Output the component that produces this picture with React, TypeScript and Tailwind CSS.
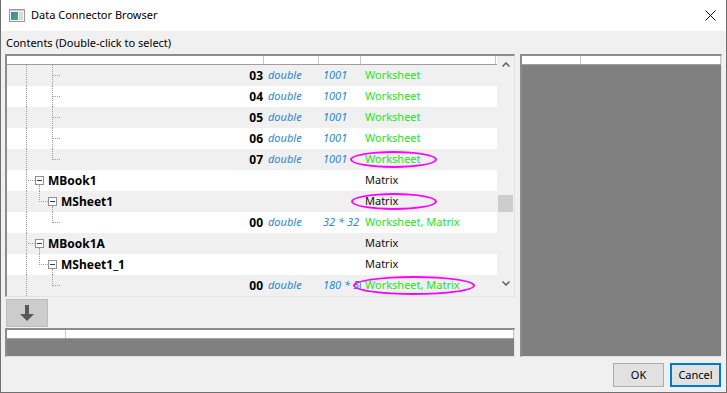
import React from 'react';

type RowKind = 'leaf' | 'lastLeaf' | 'book' | 'sheet';

type Row = {
  kind: RowKind;
  name?: string;
  idx?: string;
  dtype?: string;
  size?: string;
  usage?: string;
  green?: boolean;
  mark?: { left: number; width: number; top: number; height: number };
};

const rows: Row[] = [
  { kind: 'leaf', idx: '03', dtype: 'double', size: '1001', usage: 'Worksheet', green: true },
  { kind: 'leaf', idx: '04', dtype: 'double', size: '1001', usage: 'Worksheet', green: true },
  { kind: 'leaf', idx: '05', dtype: 'double', size: '1001', usage: 'Worksheet', green: true },
  { kind: 'leaf', idx: '06', dtype: 'double', size: '1001', usage: 'Worksheet', green: true },
  {
    kind: 'lastLeaf', idx: '07', dtype: 'double', size: '1001', usage: 'Worksheet', green: true,
    mark: { left: 343, width: 87, top: 2, height: 17 },
  },
  { kind: 'book', name: 'MBook1', usage: 'Matrix' },
  { kind: 'sheet', name: 'MSheet1', usage: 'Matrix', mark: { left: 344, width: 86, top: 2, height: 17 } },
  { kind: 'lastLeaf', idx: '00', dtype: 'double', size: '32 * 32', usage: 'Worksheet, Matrix', green: true },
  { kind: 'book', name: 'MBook1A', usage: 'Matrix' },
  { kind: 'sheet', name: 'MSheet1_1', usage: 'Matrix' },
  {
    kind: 'lastLeaf', idx: '00', dtype: 'double', size: '180 * 50', usage: 'Worksheet, Matrix', green: true,
    mark: { left: 346, width: 122, top: 1, height: 19 },
  },
];

// small "minus" expander box of the tree
const Expander = ({ left }: { left: number }) => (
  <span
    className="absolute top-[6px] w-[9px] h-[9px] border border-[#919191] bg-white flex items-center justify-center"
    style={{ left }}
  >
    <span className="block w-[5px] h-px bg-[#1f3f7a]" />
  </span>
);

const VLine = ({ left, top = 0, height = 21 }: { left: number; top?: number; height?: number }) => (
  <span className="absolute w-0 border-l border-dotted border-[#a0a0a0]" style={{ left, top, height }} />
);

const HLine = ({ left, width }: { left: number; width: number }) => (
  <span className="absolute top-[10px] h-0 border-t border-dotted border-[#a0a0a0]" style={{ left, width }} />
);

const TreeLines = ({ kind }: { kind: RowKind }) => {
  if (kind === 'leaf')
    return (
      <>
        <VLine left={19} />
        <VLine left={45} />
        <HLine left={45} width={8} />
      </>
    );
  if (kind === 'lastLeaf')
    return (
      <>
        <VLine left={19} />
        <VLine left={45} height={11} />
        <HLine left={45} width={8} />
      </>
    );
  if (kind === 'book')
    return (
      <>
        <VLine left={19} />
        <HLine left={19} width={9} />
        <Expander left={28} />
        <VLine left={32} top={15} height={6} />
      </>
    );
  return (
    <>
      <VLine left={19} />
      <VLine left={32} height={11} />
      <HLine left={32} width={9} />
      <Expander left={41} />
      <VLine left={45} top={15} height={6} />
    </>
  );
};

const Chevron = ({ up }: { up?: boolean }) => (
  <svg width="8" height="5" viewBox="0 0 8 5">
    <polyline
      points={up ? '0.5,4.5 4,1 7.5,4.5' : '0.5,0.5 4,4 7.5,0.5'}
      fill="none"
      stroke="#606060"
      strokeWidth="1.5"
    />
  </svg>
);

const frame =
  'border-t-2 border-l-2 border-r border-b border-t-[#8c8c8c] border-l-[#8c8c8c] border-r-[#e3e3e3] border-b-[#e3e3e3]';

const GrayPanel = ({ className }: { className: string }) => (
  <div className={`${frame} ${className} flex flex-col bg-[#808080]`}>
    <div className="h-[9px] shrink-0 bg-white border-b border-[#a0a0a0] flex">
      <div className="w-[59px] border-r border-[#c8c8c8]" />
      <div className="flex-1 border-r border-[#c8c8c8]" />
    </div>
  </div>
);

export default function App() {
  return (
    <div className="w-[727px] h-[393px] flex flex-col bg-[#f0f0f0] border-x border-b border-[#707070] overflow-hidden font-['Noto_Sans','Liberation_Sans',sans-serif] text-[11px] text-black">
      {/* title bar */}
      <div className="h-[31px] shrink-0 bg-white flex items-center pl-[8px] pr-[9px]">
        <svg width="16" height="13" viewBox="0 0 16 13" className="shrink-0">
          <defs>
            <linearGradient id="ic" x1="0" y1="0" x2="1" y2="1">
              <stop offset="0" stopColor="#3f7fb8" />
              <stop offset="1" stopColor="#4fae7a" />
            </linearGradient>
          </defs>
          <rect x="0.5" y="0.5" width="15" height="12" fill="#f4f4f4" stroke="#9a9a9a" />
          <rect x="2" y="3" width="7" height="8" fill="url(#ic)" />
          <rect x="10" y="3" width="4" height="8" fill="#cfe3d5" />
          <rect x="1" y="1" width="14" height="1" fill="#c8c8c8" />
        </svg>
        <span className="ml-[6px] text-[11px]">Data Connector Browser</span>
        <svg width="11" height="11" viewBox="0 0 11 11" className="ml-auto mr-[1px]">
          <path d="M0.5 0.5 L10.5 10.5 M10.5 0.5 L0.5 10.5" stroke="#111" strokeWidth="1" />
        </svg>
      </div>

      {/* label */}
      <div className="h-[23px] shrink-0 pl-[5px] pt-[4px] leading-[16px]">Contents (Double-click to select)</div>

      {/* main area */}
      <div className="h-[303px] shrink-0 flex pl-[4px] gap-[5px]">
        <div className="w-[510px] flex flex-col">
          {/* tree list */}
          <div className={`${frame} h-[243px] flex bg-white`}>
            <div className="w-[490px] flex flex-col">
              <div className="h-[9px] shrink-0 bg-white border-b border-[#a0a0a0] flex">
                <div className="w-[257px] border-r border-[#c8c8c8]" />
                <div className="w-[55px] border-r border-[#c8c8c8]" />
                <div className="w-[42px] border-r border-[#c8c8c8]" />
                <div className="w-[135px] border-r border-[#c8c8c8]" />
              </div>
              {rows.map((r, i) => (
                <div
                  key={i}
                  className={`relative h-[21px] shrink-0 flex items-center whitespace-nowrap ${
                    i % 2 === 0 ? 'bg-[#f0f0f0]' : 'bg-white'
                  }`}
                >
                  <TreeLines kind={r.kind} />
                  <div className="w-[257px] h-full flex items-center">
                    {r.name ? (
                      <span
                        className="font-bold text-[12px]"
                        style={{ paddingLeft: r.kind === 'book' ? 41 : 54 }}
                      >
                        {r.name}
                      </span>
                    ) : (
                      <span className="ml-auto pr-[1px] font-bold text-[12px]">{r.idx}</span>
                    )}
                  </div>
                  <div className="w-[55px] pl-[4px] italic text-[#2a86d0] overflow-hidden">{r.dtype}</div>
                  <div className="w-[42px] pl-[4px] italic text-[#2a86d0] overflow-hidden">{r.size}</div>
                  <div className={`w-[135px] pl-[4px] ${r.green ? 'text-[#22e622]' : 'text-[#111]'}`}>
                    {r.usage}
                  </div>
                  {r.mark && (
                    <span
                      className="absolute rounded-[50%] border-2 border-[#ff00ff]"
                      style={{ left: r.mark.left, top: r.mark.top, width: r.mark.width, height: r.mark.height }}
                    />
                  )}
                </div>
              ))}
            </div>
            {/* scrollbar */}
            <div className="w-[17px] bg-[#f0f0f0] flex flex-col items-center">
              <div className="h-[17px] flex items-center justify-center">
                <Chevron up />
              </div>
              <div className="flex-1 w-full px-[1px] pt-[122px]">
                <div className="h-[17px] bg-[#cdcdcd]" />
              </div>
              <div className="h-[17px] flex items-start justify-center pt-[2px]">
                <Chevron />
              </div>
            </div>
          </div>

          {/* move-down button */}
          <button className="mt-[2px] ml-[1px] w-[42px] h-[28px] bg-[#cccccc] border border-[#bdbdbd] flex items-center justify-center">
            <svg width="14" height="17" viewBox="0 0 14 17">
              <rect x="5" y="0" width="4" height="10" fill="#595959" />
              <polygon points="0,9 14,9 7,16" fill="#595959" />
            </svg>
          </button>

          <GrayPanel className="mt-[1px] h-[29px]" />
        </div>

        <GrayPanel className="w-[202px] h-[303px]" />
      </div>

      {/* dialog buttons */}
      <div className="flex justify-end gap-[6px] pr-[5px] pt-[6px]">
        <button className="w-[51px] h-[24px] bg-[#e1e1e1] border border-[#adadad] text-[11px]">OK</button>
        <button className="w-[51px] h-[24px] bg-[#e1e1e1] border-2 border-[#0078d7] text-[11px]">Cancel</button>
      </div>
    </div>
  );
}
